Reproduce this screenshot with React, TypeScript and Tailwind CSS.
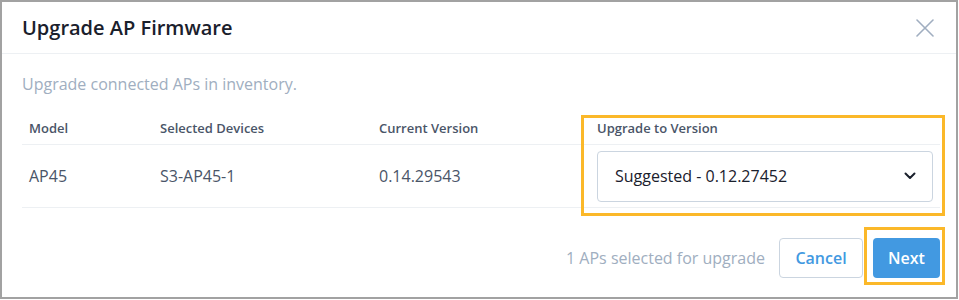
type Row = { model: string; devices: string; current: string; suggested: string };

const rows: Row[] = [
  { model: "AP45", devices: "S3-AP45-1", current: "0.14.29543", suggested: "Suggested - 0.12.27452" },
];

const cols = "grid grid-cols-[131px_219px_218px_1fr]";

export default function App() {
  return (
    <div className="relative h-[300px] w-[959px] bg-white font-['Open_Sans',sans-serif]">
      <div className="flex h-[299px] w-[958px] flex-col border-2 border-[#a2a2a2] bg-white">
        {/* header */}
        <div className="flex h-[52px] shrink-0 items-center justify-between border-b border-[#edf0f3] pl-[20px] pr-[22px]">
          <h1 className="text-[20px] font-semibold text-[#1a202c]">Upgrade AP Firmware</h1>
          <svg width="18" height="18" viewBox="0 0 18 18" fill="none" className="mt-[1px]">
            <path d="M1 1l16 16M17 1 1 17" stroke="#a0aec0" strokeWidth="1.6" strokeLinecap="round" />
          </svg>
        </div>

        {/* body */}
        <div className="pl-[20px] pr-[16px]">
          <p className="mt-[18px] text-[16px] leading-6 text-[#a0aec0]">Upgrade connected APs in inventory.</p>

          <div className="mt-[17px]">
            <div className={`${cols} h-[32px] items-center border-b border-[#edf0f3] text-[13px] font-semibold text-[#4a5568]`}>
              <div className="px-[7px]">Model</div>
              <div className="px-[7px]">Selected Devices</div>
              <div className="px-[7px]">Current Version</div>
              <div className="px-[7px]">Upgrade to Version</div>
            </div>
            {rows.map((r) => (
              <div key={r.devices} className={`${cols} h-[63px] items-center border-b border-[#edf0f3] text-[16px] text-[#4a5568]`}>
                <div className="px-[7px]">{r.model}</div>
                <div className="px-[7px]">{r.devices}</div>
                <div className="px-[7px]">{r.current}</div>
                <div className="px-[7px]">
                  <div className="flex h-[51px] items-center justify-between rounded-[4px] border border-[#cbd5e0] pl-[17px] pr-[16px] text-[#1a202c]">
                    <span>{r.suggested}</span>
                    <svg width="12" height="8" viewBox="0 0 12 8" fill="none">
                      <path d="M1.5 1.5 6 6l4.5-4.5" stroke="#1a202c" strokeWidth="2" strokeLinecap="round" strokeLinejoin="round" />
                    </svg>
                  </div>
                </div>
              </div>
            ))}
          </div>

          {/* footer */}
          <div className="mt-[30px] flex items-center justify-end">
            <span className="mr-[14px] text-[16px] text-[#a0aec0]">1 APs selected for upgrade</span>
            <button className="h-[40px] w-[84px] rounded-[4px] border border-[#cbd5e0] bg-white text-[16px] font-semibold text-[#4299e1]">
              Cancel
            </button>
            <button className="ml-[10px] h-[40px] w-[67px] rounded-[4px] bg-[#4299e1] text-[16px] font-semibold text-white">
              Next
            </button>
          </div>
        </div>
      </div>

      {/* annotation highlights */}
      <div className="pointer-events-none absolute left-[581px] top-[115px] h-[101px] w-[364px] border-[3px] border-[#fbb829]" />
      <div className="pointer-events-none absolute left-[864px] top-[227px] h-[58px] w-[81px] border-[3px] border-[#fbb829]" />
    </div>
  );
}
